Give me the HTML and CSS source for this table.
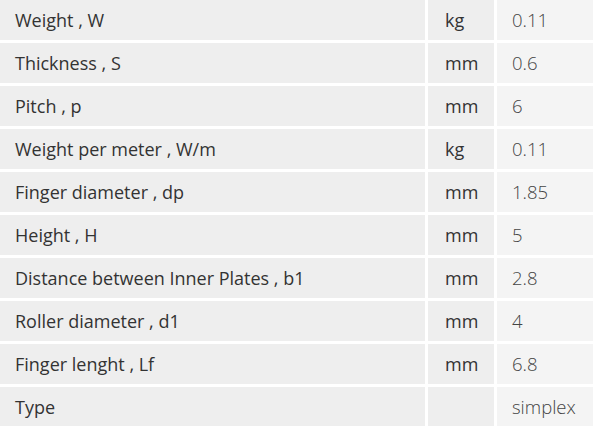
FILE: index.html
```html
<!DOCTYPE html>
<html>
<head>
<meta charset="utf-8">
<link rel="stylesheet" href="styles.css">
</head>
<body>
<table class="specs">
  <tbody>
    <tr><td class="name">Weight , W</td><td class="unit">kg</td><td class="val">0.11</td></tr>
    <tr><td class="name">Thickness , S</td><td class="unit">mm</td><td class="val">0.6</td></tr>
    <tr><td class="name">Pitch , p</td><td class="unit">mm</td><td class="val">6</td></tr>
    <tr><td class="name">Weight per meter , W/m</td><td class="unit">kg</td><td class="val">0.11</td></tr>
    <tr><td class="name">Finger diameter , dp</td><td class="unit">mm</td><td class="val">1.85</td></tr>
    <tr><td class="name">Height , H</td><td class="unit">mm</td><td class="val">5</td></tr>
    <tr><td class="name">Distance between Inner Plates , b1</td><td class="unit">mm</td><td class="val">2.8</td></tr>
    <tr><td class="name">Roller diameter , d1</td><td class="unit">mm</td><td class="val">4</td></tr>
    <tr><td class="name">Finger lenght , Lf</td><td class="unit">mm</td><td class="val">6.8</td></tr>
    <tr><td class="name">Type</td><td class="unit"></td><td class="val">simplex</td></tr>
  </tbody>
</table>
</body>
</html>
```
FILE: styles.css
```css
html, body {
  margin: 0;
  padding: 0;
  background: #ffffff;
}
body {
  font-family: "Open Sans", "Noto Sans", "Liberation Sans", sans-serif;
  color: #333333;
  overflow: hidden;
}
.specs {
  border-collapse: separate;
  border-spacing: 3px 3px;
  margin: -3px -3px 0 -3px;
  width: 599px;
  table-layout: fixed;
}
.specs td {
  height: 40px;
  padding: 0 0 0 15px;
  box-sizing: border-box;
  font-size: 18px;
  line-height: 20px;
  vertical-align: middle;
  white-space: nowrap;
}
.specs td.name {
  width: 425px;
  background: #eeeeee;
}
.specs td.unit {
  width: 66px;
  padding-left: 17px;
  background: #eeeeee;
}
.specs td.val {
  background: #f4f4f4;
  color: #444444;
  font-weight: 300;
  font-size: 18.5px;
}
```
